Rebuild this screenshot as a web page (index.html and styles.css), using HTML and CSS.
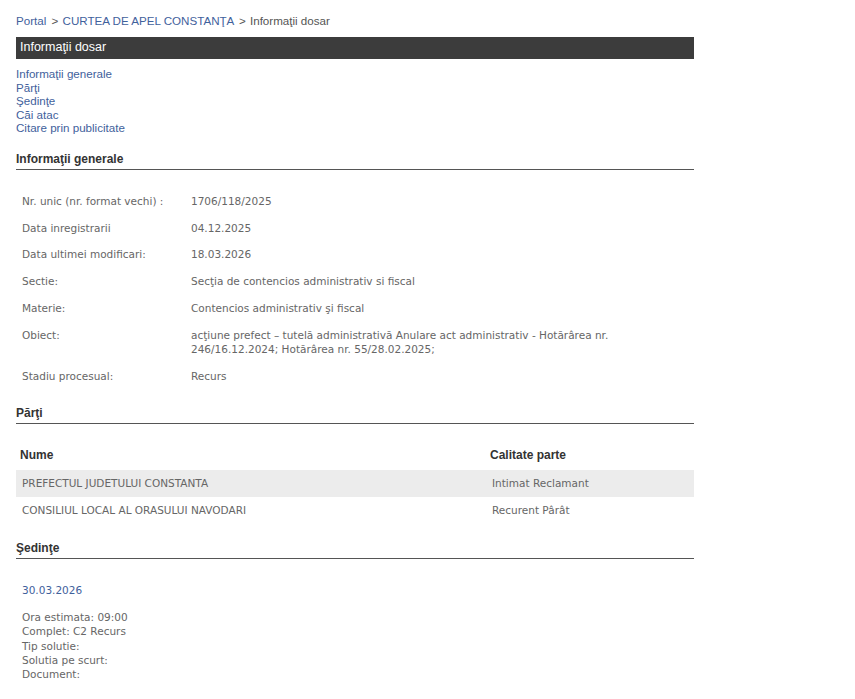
FILE: index.html
```html
<!DOCTYPE html>
<html lang="ro">
<head>
    <meta charset="UTF-8">
    <title>Informaţii dosar</title>
    <link rel="stylesheet" href="styles.css">
</head>
<body>
    <div class="container">
        <div class="breadcrumb">
            <a href="#">Portal</a>
            <span class="sep">&gt;</span>
            <a href="#">CURTEA DE APEL CONSTANŢA</a>
            <span class="sep">&gt;</span>
            <span class="current">Informaţii dosar</span>
        </div>

        <div class="title-bar">Informaţii dosar</div>

        <ul class="anchors">
            <li><a href="#generale">Informaţii generale</a></li>
            <li><a href="#parti">Părţi</a></li>
            <li><a href="#sedinte">Şedinţe</a></li>
            <li><a href="#cai">Căi atac</a></li>
            <li><a href="#citare">Citare prin publicitate</a></li>
        </ul>

        <h2 class="section-title" id="generale">Informaţii generale</h2>
        <table class="info-table">
            <tr>
                <td class="label">Nr. unic (nr. format vechi) :</td>
                <td>1706/118/2025</td>
            </tr>
            <tr>
                <td class="label">Data inregistrarii</td>
                <td>04.12.2025</td>
            </tr>
            <tr>
                <td class="label">Data ultimei modificari:</td>
                <td>18.03.2026</td>
            </tr>
            <tr>
                <td class="label">Sectie:</td>
                <td>Secţia de contencios administrativ si fiscal</td>
            </tr>
            <tr>
                <td class="label">Materie:</td>
                <td>Contencios administrativ şi fiscal</td>
            </tr>
            <tr>
                <td class="label">Obiect:</td>
                <td>acţiune prefect – tutelă administrativă Anulare act administrativ - Hotărârea nr. 246/16.12.2024; Hotărârea nr. 55/28.02.2025;</td>
            </tr>
            <tr>
                <td class="label">Stadiu procesual:</td>
                <td>Recurs</td>
            </tr>
        </table>

        <h2 class="section-title after-table" id="parti">Părţi</h2>
        <table class="parti-table">
            <thead>
                <tr>
                    <th class="col-name">Nume</th>
                    <th>Calitate parte</th>
                </tr>
            </thead>
            <tbody>
                <tr class="odd">
                    <td>PREFECTUL JUDETULUI CONSTANTA</td>
                    <td>Intimat Reclamant</td>
                </tr>
                <tr>
                    <td>CONSILIUL LOCAL AL ORASULUI NAVODARI</td>
                    <td>Recurent Pârât</td>
                </tr>
            </tbody>
        </table>

        <h2 class="section-title" id="sedinte">Şedinţe</h2>
        <div class="sedinta">
            <div class="sedinta-date">30.03.2026</div>
            <div class="sedinta-info">
                Ora estimata: 09:00<br>
                Complet: C2 Recurs<br>
                Tip solutie:<br>
                Solutia pe scurt:<br>
                Document:
            </div>
        </div>
    </div>
</body>
</html>
```

FILE: styles.css
```css
:root {
    --link-color: #3f619c;
    --text-color: #666;
    --heading-color: #333;
    --bar-color: #3c3c3c;
}

body {
    margin: 0;
    background: #fff;
    font-family: 'Liberation Sans', Arial, sans-serif;
    font-size: 11.6px;
    color: var(--text-color);
}

.container {
    width: 678px;
    margin-left: 16px;
    padding-top: 14px;
}

a {
    color: var(--link-color);
    text-decoration: none;
}

.breadcrumb {
    line-height: 14px;
    color: #555;
}

.breadcrumb .sep {
    margin: 0 1px 0 2px;
}

.title-bar {
    margin-top: 9px;
    height: 22px;
    line-height: 21px;
    padding-left: 4px;
    background: var(--bar-color);
    color: #fff;
    font-size: 12.5px;
}

.anchors {
    list-style: none;
    margin: 8px 0 0;
    padding: 0;
    line-height: 13.5px;
}

.section-title {
    margin: 17px 0 0;
    padding-bottom: 3px;
    border-bottom: 1px solid #555;
    font-size: 12px;
    line-height: 14px;
    color: var(--heading-color);
}

.section-title.after-table {
    margin-top: 17px;
}

.info-table,
.parti-table {
    width: 100%;
    border-collapse: collapse;
    font-family: 'DejaVu Sans', Verdana, sans-serif;
    font-size: 10.5px;
}

.info-table {
    margin-top: 18px;
}

.info-table td {
    padding: 6.4px 6px;
    line-height: 14px;
    vertical-align: top;
}

.info-table td.label {
    width: 157px;
}

.parti-table {
    margin-top: 18px;
}

.parti-table th {
    text-align: left;
    font-family: 'Liberation Sans', Arial, sans-serif;
    font-size: 12px;
    color: var(--heading-color);
    padding: 6px 4px 8px;
}

.parti-table th.col-name {
    width: 462px;
}

.parti-table td {
    padding: 6.5px 6px;
    line-height: 14px;
}

.parti-table tr.odd {
    background: #ececec;
}

.sedinta {
    margin-top: 24px;
    padding-left: 6px;
    font-family: 'DejaVu Sans', Verdana, sans-serif;
    font-size: 10.5px;
}

.sedinta-date {
    color: var(--link-color);
    line-height: 14px;
}

.sedinta-info {
    margin-top: 13px;
    line-height: 14.3px;
}
```
